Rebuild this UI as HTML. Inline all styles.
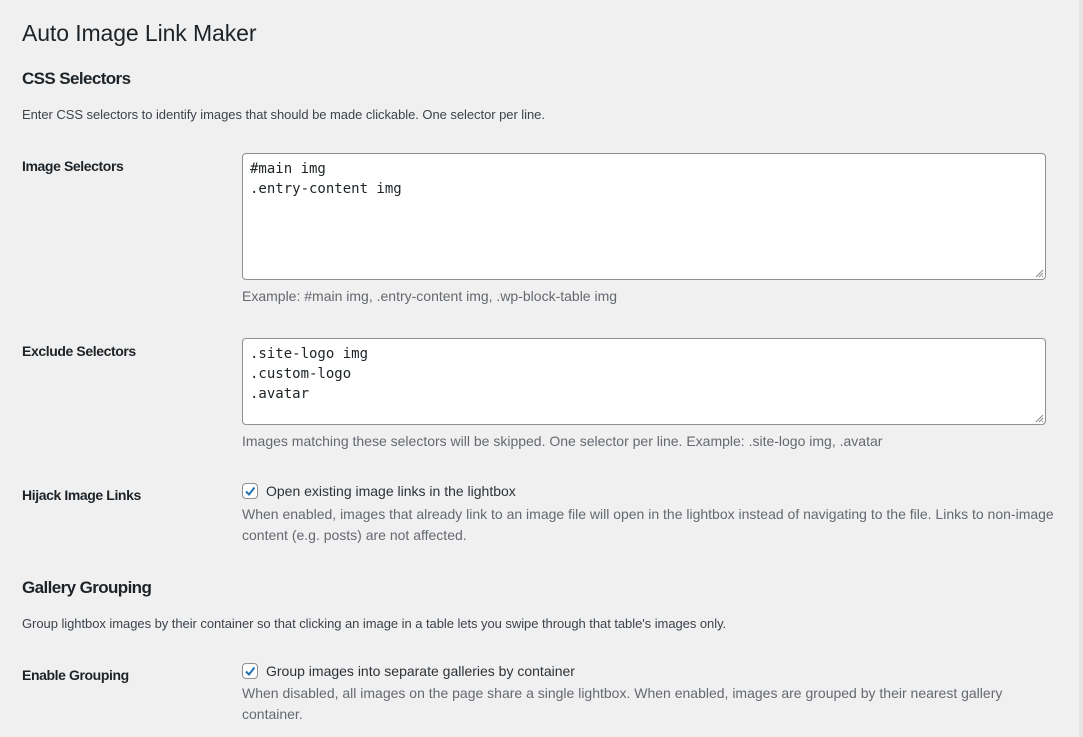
<!DOCTYPE html>
<html><head><meta charset="utf-8"><style>
body{margin:0;width:1083px;height:737px;background:#f0f0f1;font-family:"Liberation Sans",sans-serif;color:#1d2327;position:relative;overflow:hidden}
.a{position:absolute;white-space:nowrap;line-height:1}
h1{position:absolute;left:22px;top:22px;margin:0;font-size:23px;font-weight:400;line-height:1;letter-spacing:-0.1px}
.h2{font-size:17px;font-weight:700;left:22px;letter-spacing:-0.6px}
.d{font-size:13px;left:22px;color:#3c434a;letter-spacing:-0.05px}
.l{font-size:14px;font-weight:700;left:22px;letter-spacing:-0.4px}
.ta{position:absolute;left:242px;width:804px;background:#fff;border:1px solid #8c8f94;border-radius:4px;font-family:"DejaVu Sans Mono",monospace;font-size:14px;line-height:20px;padding:5px 7px;box-sizing:border-box;white-space:pre}
.ta svg{position:absolute;right:1px;bottom:1px}
.h{font-size:14px;color:#646970;left:242px}
.cb{position:absolute;left:242px;width:16px;height:16px;border:1px solid #8c8f94;border-radius:4px;background:#fff;box-sizing:border-box}
.t{font-size:14px;left:266px;color:#2c3338}
.p{position:absolute;left:242px;font-size:14px;color:#646970;line-height:21px;width:820px}
</style></head><body>
<h1>Auto Image Link Maker</h1>
<div class="a h2" style="top:70px">CSS Selectors</div>
<div class="a d" style="top:108px">Enter CSS selectors to identify images that should be made clickable. One selector per line.</div>
<div class="a l" style="top:159px">Image Selectors</div>
<div class="ta" style="top:153px;height:127px">#main img
.entry-content img<svg width="10" height="10"><path d="M9 2L2 9M9 5L5 9M9 8L8 9" stroke="#888" stroke-width="1"/></svg></div>
<div class="a h" style="top:289px">Example: #main img, .entry-content img, .wp-block-table img</div>
<div class="a l" style="top:344px">Exclude Selectors</div>
<div class="ta" style="top:338px;height:87px">.site-logo img
.custom-logo
.avatar<svg width="10" height="10"><path d="M9 2L2 9M9 5L5 9M9 8L8 9" stroke="#888" stroke-width="1"/></svg></div>
<div class="a h" style="top:434px">Images matching these selectors will be skipped. One selector per line. Example: .site-logo img, .avatar</div>
<div class="a l" style="top:488px">Hijack Image Links</div>
<div class="cb" style="top:483px"><svg width="14" height="14" viewBox="0 0 14 14"><path d="M3 7.5L6 10.5L11.5 3.5" fill="none" stroke="#2271b1" stroke-width="2"/></svg></div>
<div class="a t" style="top:484px">Open existing image links in the lightbox</div>
<div class="p" style="top:504px">When enabled, images that already link to an image file will open in the lightbox instead of navigating to the file. Links to non-image content (e.g. posts) are not affected.</div>
<div class="a h2" style="top:579px">Gallery Grouping</div>
<div class="a d" style="top:617px">Group lightbox images by their container so that clicking an image in a table lets you swipe through that table's images only.</div>
<div class="a l" style="top:668px">Enable Grouping</div>
<div class="cb" style="top:663px"><svg width="14" height="14" viewBox="0 0 14 14"><path d="M3 7.5L6 10.5L11.5 3.5" fill="none" stroke="#2271b1" stroke-width="2"/></svg></div>
<div class="a t" style="top:664px">Group images into separate galleries by container</div>
<div class="p" style="top:683px;width:790px">When disabled, all images on the page share a single lightbox. When enabled, images are grouped by their nearest gallery container.</div>
<div style="position:absolute;left:1079px;top:0;width:4px;height:737px;background:#e4e4e5"></div>
</body></html>
